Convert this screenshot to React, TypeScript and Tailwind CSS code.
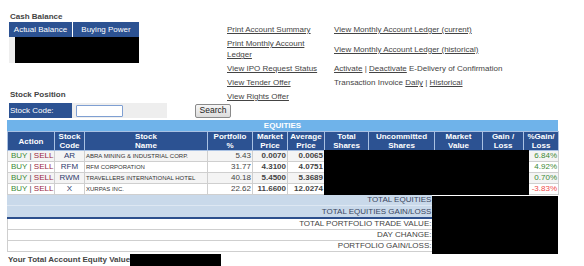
import React from 'react';

const rows = [
  { code: 'AR', name: 'ABRA MINING & INDUSTRIAL CORP.', pct: '5.43', mkt: '0.0070', avg: '0.0065', gain: '6.84%', up: true },
  { code: 'RFM', name: 'RFM CORPORATION', pct: '31.77', mkt: '4.3100', avg: '4.0751', gain: '4.92%', up: true },
  { code: 'RWM', name: 'TRAVELLERS INTERNATIONAL HOTEL', pct: '40.18', mkt: '5.4500', avg: '5.3689', gain: '0.70%', up: true },
  { code: 'X', name: 'XURPAS INC.', pct: '22.62', mkt: '11.6600', avg: '12.0274', gain: '-3.83%', up: false },
];

const heads = [
  ['Action'],
  ['Stock', 'Code'],
  ['Stock', 'Name'],
  ['Portfolio', '%'],
  ['Market', 'Price'],
  ['Average', 'Price'],
  ['Total', 'Shares'],
  ['Uncommitted', 'Shares'],
  ['Market', 'Value'],
  ['Gain /', 'Loss'],
  ['%Gain/', 'Loss'],
];

const widths = [47, 30, 123, 45, 35, 37, 44, 66, 48, 41, 35];

const Link = ({ children }: { children: React.ReactNode }) => (
  <span className="underline text-[#444]">{children}</span>
);

export default function App() {
  return (
    <div className="w-[584px] h-[266px] overflow-hidden bg-white text-[#444] text-[8px] leading-[11px] font-['Liberation_Sans',Arial,sans-serif]">
      {/* top: cash balance + links */}
      <div className="flex">
        <div className="w-[218px] pl-[9px] pt-[12px] flex flex-col">
          <div className="font-bold leading-[10px] pl-[1px]">Cash Balance</div>
          <div className="flex w-[130px] h-[15px]">
            <div className="w-[63px] bg-[#2c5292] text-white flex items-center justify-center">Actual Balance</div>
            <div className="w-[66px] ml-[1px] bg-[#2c5292] text-white flex items-center justify-center">Buying Power</div>
          </div>
          <div className="w-[130px] h-[26px] bg-[#eeeeee] pl-[6px]">
            <div className="w-full h-full bg-black" />
          </div>
          <div className="mt-auto mb-[2px] font-bold leading-[10px] pl-[1px]">Stock Position</div>
        </div>
        <div className="ml-[9px] pt-[24px] grid grid-cols-[100px_auto] gap-x-[7px] gap-y-[3px] items-center">
          <Link>Print Account Summary</Link>
          <Link>View Monthly Account Ledger (current)</Link>
          <div className="w-[85px]"><Link>Print Monthly Account Ledger</Link></div>
          <Link>View Monthly Account Ledger (historical)</Link>
          <Link>View IPO Request Status</Link>
          <span><Link>Activate</Link> | <Link>Deactivate</Link> E-Delivery of Confirmation</span>
          <Link>View Tender Offer</Link>
          <span>Transaction Invoice <Link>Daily</Link> | <Link>Historical</Link></span>
          <Link>View Rights Offer</Link>
        </div>
      </div>

      {/* stock code search */}
      <div className="flex items-center pl-[9px] mt-[1px] h-[15px]">
        <div className="w-[63px] h-full bg-[#2c5292] text-white pl-[1px] flex items-center">Stock Code:</div>
        <div className="w-[95px] h-full bg-[#eeeeee] flex items-center">
          <div className="ml-[4px] w-[47px] h-[12px] bg-white border border-[#7f9fd2] rounded-[1px]" />
        </div>
        <div className="ml-[28px] w-[36px] h-[14px] border border-[#8a8a8a] rounded-[2px] bg-gradient-to-b from-[#f6f6f6] to-[#dcdcdc] text-[#222] text-[8.5px] flex items-center justify-center">
          Search
        </div>
      </div>

      {/* equities */}
      <div className="relative ml-[7px] mt-[2px] w-[551px]">
        <div className="h-[11px] bg-[#6fb3ea] text-white font-bold text-center leading-[11px]">EQUITIES</div>
        <table className="table-fixed border-collapse w-[551px]">
          <colgroup>
            {widths.map((w, i) => (
              <col key={i} style={{ width: w }} />
            ))}
          </colgroup>
          <thead>
            <tr className="h-[18px]">
              {heads.map((h, i) => (
                <th key={i} className="bg-[#2c5292] text-white font-bold leading-[9px] border border-[#a9c1e3] p-0 align-middle">
                  {h.map((l, j) => (
                    <div key={j}>{l}</div>
                  ))}
                </th>
              ))}
            </tr>
          </thead>
          <tbody>
            {rows.map((r, i) => (
              <tr key={r.code} className={`h-[11px] ${i % 2 === 0 ? 'bg-[#f4f4f4]' : 'bg-white'}`}>
                <td className="border border-[#cfcfcf] p-0 pl-[3px] leading-[10px]">
                  <span className="text-[#3d8a35]">BUY</span> | <span className="text-[#9a1f3f]">SELL</span>
                </td>
                <td className="border border-[#cfcfcf] p-0 text-center text-[#2e3a6b] leading-[10px]">{r.code}</td>
                <td className="border border-[#cfcfcf] p-0 pl-[1px] text-[6px] leading-[10px] text-[#333] whitespace-nowrap overflow-hidden">{r.name}</td>
                <td className="border border-[#cfcfcf] p-0 pr-[1px] text-right leading-[10px]">{r.pct}</td>
                <td className="border border-[#cfcfcf] p-0 pr-[1px] text-right font-bold leading-[10px]">{r.mkt}</td>
                <td className="border border-[#cfcfcf] p-0 pr-[1px] text-right font-bold leading-[10px] whitespace-nowrap">{r.avg}</td>
                <td className="border border-[#cfcfcf] p-0" />
                <td className="border border-[#cfcfcf] p-0" />
                <td className="border border-[#cfcfcf] p-0" />
                <td className="border border-[#cfcfcf] p-0" />
                <td className={`border border-[#cfcfcf] p-0 pr-[1px] text-right leading-[10px] ${r.up ? 'text-[#3d8a35]' : 'text-[#f04a4a]'}`}>{r.gain}</td>
              </tr>
            ))}
          </tbody>
        </table>
        {/* redacted figures */}
        <div className="absolute left-[317px] top-[30px] w-[205px] h-[45px] bg-black" />

        {/* totals */}
        <div className="flex">
          <div className="w-[427px]">
            <div className="h-[11px] bg-[#c9d9ea] text-right text-[#3a4660] pr-[1px] leading-[10px] border-b border-[#dde7f2]">TOTAL EQUITIES</div>
            <div className="h-[11px] bg-[#c9d9ea] text-right text-[#3a4660] pr-[1px] leading-[11px]">TOTAL EQUITIES GAIN/LOSS</div>
            <div className="h-[2px] bg-[#2c4f8c]" />
            <div className="border-l border-[#cfcfcf]">
              <div className="h-[11px] text-right pr-[1px] leading-[10px] border-b border-[#cfcfcf]">TOTAL PORTFOLIO TRADE VALUE:</div>
              <div className="h-[11px] text-right pr-[1px] leading-[10px] border-b border-[#cfcfcf]">DAY CHANGE:</div>
              <div className="h-[11px] text-right pr-[1px] leading-[10px] border-b border-[#cfcfcf]">PORTFOLIO GAIN/LOSS:</div>
            </div>
          </div>
          <div className="w-[126px] h-[58px] mt-[1px] bg-black" />
        </div>
      </div>

      <div className="flex pl-[8px]">
        <div className="font-bold leading-[11px]">Your Total Account Equity Value</div>
        <div className="w-[91px] h-[14px] bg-black" />
      </div>
    </div>
  );
}
